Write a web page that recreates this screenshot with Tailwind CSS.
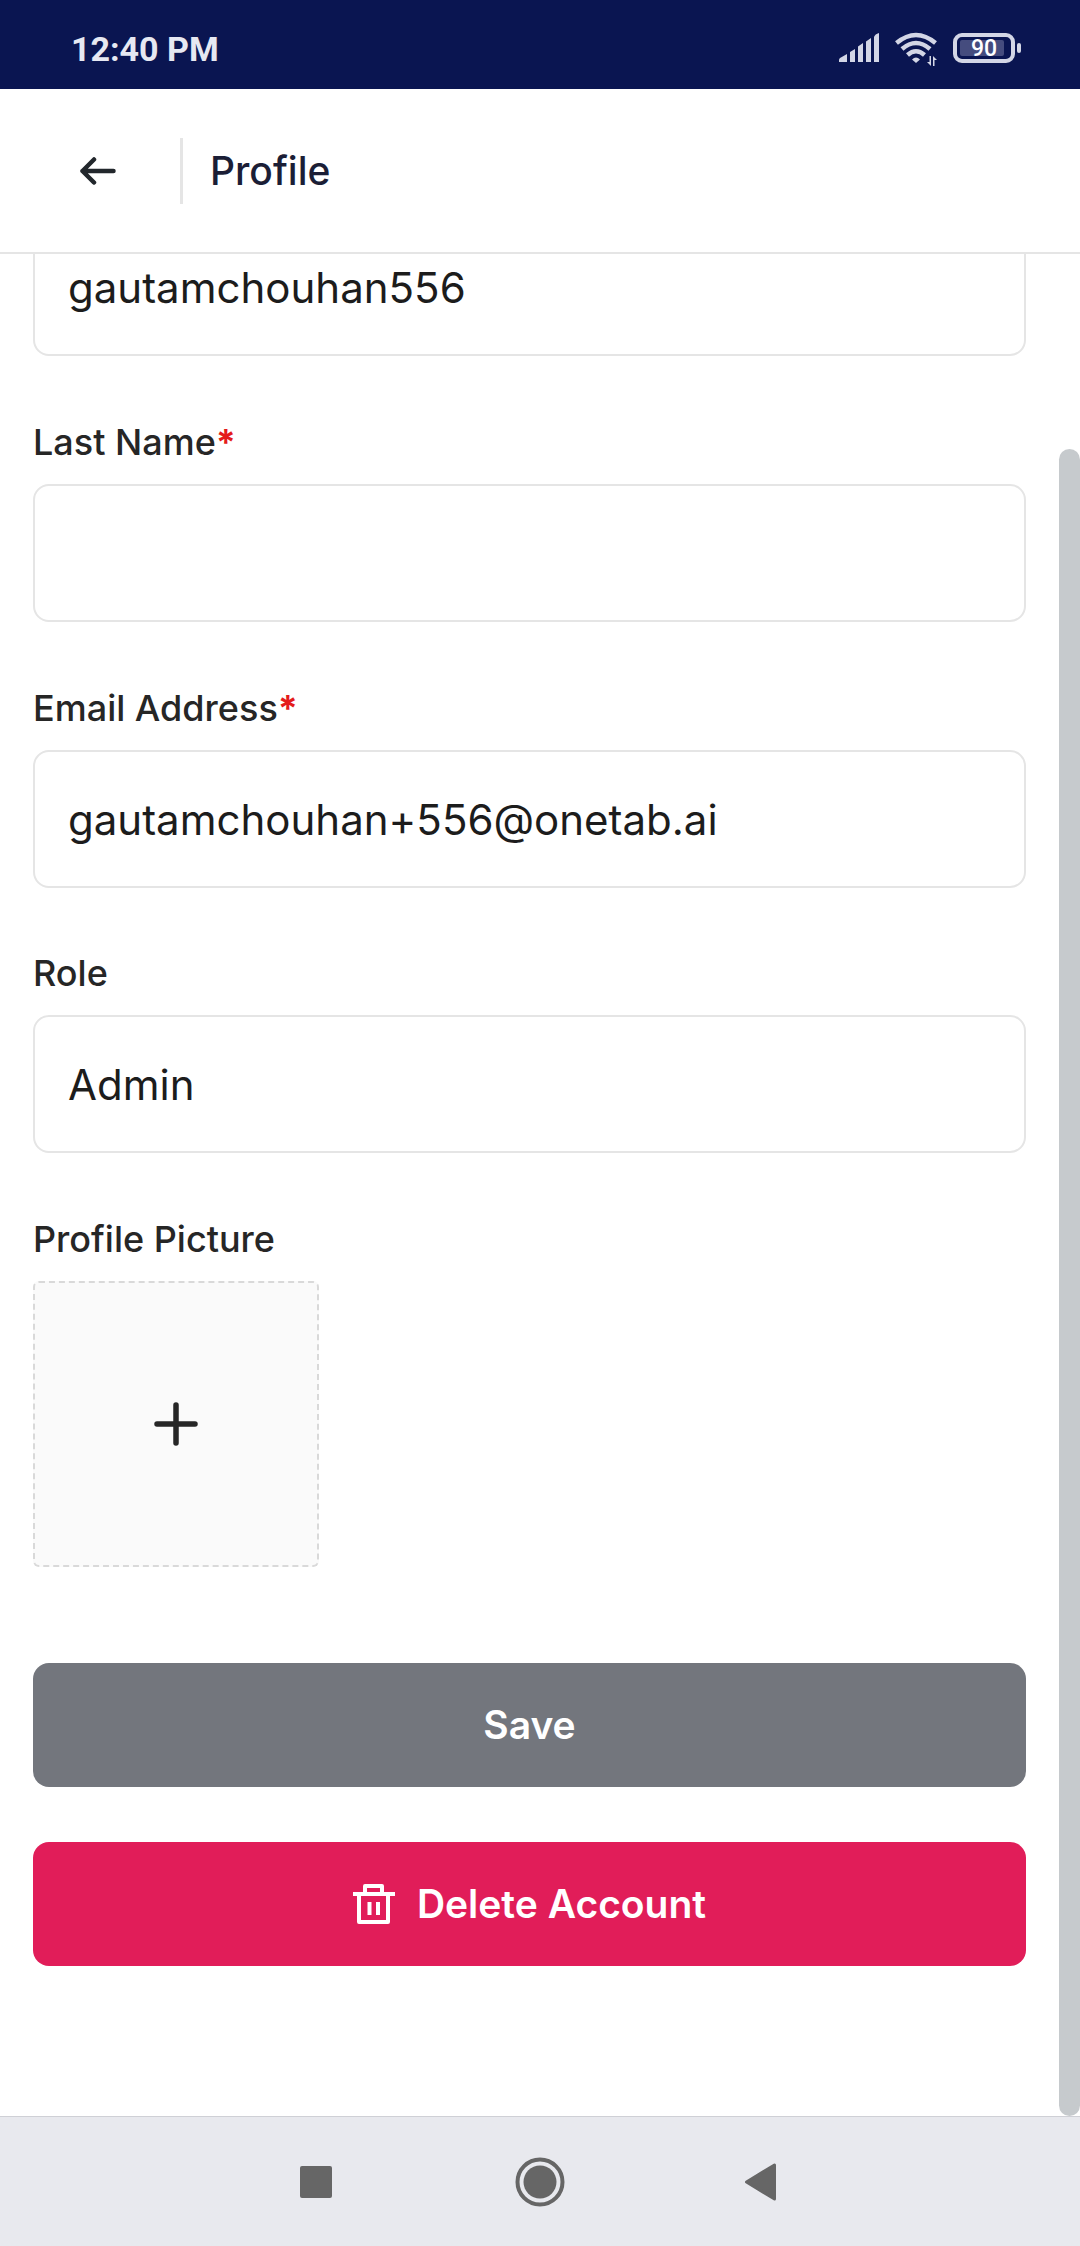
<!DOCTYPE html>
<html lang="en">
<head>
  <meta charset="UTF-8">
  <meta name="viewport" content="width=device-width, initial-scale=1.0">
  <title>Profile</title>
  <script src="https://cdn.jsdelivr.net/npm/@tailwindcss/browser@4"></script>
</head>
<body class="h-screen flex flex-col overflow-hidden bg-white text-[#262626] font-['Inter','Liberation_Sans',sans-serif]">

  <!-- status bar -->
  <div class="h-[89px] shrink-0 bg-[#0a1551] flex items-center justify-between pt-2 pl-[71px] pr-[59px]">
    <span class="font-['Roboto',sans-serif] font-bold text-[34px] leading-[40px] text-[#e6e8f2]">12:40 PM</span>
    <div class="flex items-center gap-4 text-[#d3d6e6]">
      <svg width="40" height="34" viewBox="0 0 40 34" fill="currentColor">
        <path d="M0 30v-2q0-1 1-2l7-4v8zM11 30V20l5-3v13zM19 30V14.500l5-3.500v19zM27 30V9.500l5-3.500v24zM35 30V5q1-3 5-4v29z"/>
      </svg>
      <svg width="42" height="34" viewBox="0 0 42 34" fill="none" stroke="currentColor" stroke-width="4.500">
        <path d="M1.500 11Q21-5 40.500 11M7 17Q21 5 35 17M12.500 23Q21 15.500 29.500 23"/>
        <path d="M17 27.500Q21 23.500 25 27.500L21 31z" fill="currentColor" stroke="none"/>
        <path d="M36 24v10l-4-4h2.500v-6zM38 34V24l4 4h-2.500v6z" fill="currentColor" stroke="none"/>
      </svg>
      <svg width="68" height="34" viewBox="0 0 68 34">
        <rect x="2" y="3" width="58" height="26" rx="7" fill="none" stroke="currentColor" stroke-width="4"/>
        <rect x="7" y="8" width="44" height="16" rx="2" fill="#454c7e"/>
        <rect x="64" y="11" width="4" height="10" rx="2" fill="currentColor"/>
        <text x="31" y="24" text-anchor="middle" fill="#fff" class="font-['Roboto',sans-serif] font-medium text-[23px]">90</text>
      </svg>
    </div>
  </div>

  <!-- header -->
  <header class="h-[165px] shrink-0 border-b-2 border-[#e5e5e5] flex items-center pl-[78px]">
    <button type="button" aria-label="Back" class="mr-16">
      <svg width="38" height="28" viewBox="0 0 38 28" fill="none" stroke="#22272c" stroke-width="4.500" stroke-linecap="round" stroke-linejoin="round">
        <path d="M35.500 14H4.500M16 2.500L4.500 14L16 25.500"/>
      </svg>
    </button>
    <div class="w-[3px] h-[66px] bg-[#e5e5e5] mr-[27px]"></div>
    <h1 class="text-[39px] leading-[48px] font-medium text-[#1b1e36]">Profile</h1>
  </header>

  <main class="relative flex-1 min-h-0 overflow-hidden">
    <!-- form is scrolled, so the first field starts above the visible area -->
    <form class="-mt-9 pl-[33px] pr-[54px]">
      <input type="text" aria-label="First name" value="gautamchouhan556" class="block w-full h-[138px] px-[33px] border-2 border-[#e5e5e5] rounded-2xl text-[42px] leading-[52px] text-[#1c1c1c]">

      <label for="lastName" class="block pt-[66px] pb-[22px] text-[36px] leading-[40px] font-medium">Last Name<span class="font-bold text-[#e41b1b]">*</span></label>
      <input type="text" id="lastName" class="block w-full h-[138px] px-[33px] border-2 border-[#e5e5e5] rounded-2xl text-[42px] leading-[52px] text-[#1c1c1c]">

      <label for="email" class="block pt-[66px] pb-[22px] text-[36px] leading-[40px] font-medium">Email Address<span class="font-bold text-[#e41b1b]">*</span></label>
      <input type="email" id="email" value="gautamchouhan+556@onetab.ai" class="block w-full h-[138px] px-[33px] border-2 border-[#e5e5e5] rounded-2xl text-[42px] leading-[52px] text-[#1c1c1c]">

      <label for="role" class="block pt-[65px] pb-[22px] text-[36px] leading-[40px] font-medium">Role</label>
      <input type="text" id="role" value="Admin" class="block w-full h-[138px] px-[33px] border-2 border-[#e5e5e5] rounded-2xl text-[42px] leading-[52px] text-[#1c1c1c]">

      <label for="picture" class="block pt-[66px] pb-[22px] text-[36px] leading-[40px] font-medium">Profile Picture</label>
      <button type="button" id="picture" class="flex items-center justify-center size-[286px] border-2 border-dashed border-[#d9d9d9] rounded-md bg-[#fafafa]">
        <svg width="44" height="44" viewBox="0 0 44 44" fill="none" stroke="#262626" stroke-width="5.500" stroke-linecap="round">
          <path d="M22 3v38M3 22h38"/>
        </svg>
      </button>

      <button type="submit" class="mt-24 block w-full h-[124px] rounded-2xl bg-[#73767d] text-white text-[39px] leading-[48px] font-semibold">Save</button>
      <button type="button" class="mt-[55px] flex items-center justify-center gap-[22px] w-full h-[124px] rounded-2xl bg-[#e11d59] text-white text-[39px] leading-[48px] font-semibold">
        <svg width="42" height="42" viewBox="0 0 42 42" fill="none" stroke="currentColor" stroke-width="4" stroke-linejoin="round">
          <path d="M0 11h42M6 11v28h29V11M12 11V3h17v8"/>
          <path d="M16.500 19v13M25 19v13"/>
        </svg>
        Delete Account
      </button>
    </form>

    <!-- scrollbar thumb -->
    <div class="absolute right-0 top-[195px] bottom-0 w-[21px] rounded-full bg-[#c6cacd]"></div>
  </main>

  <!-- system navigation -->
  <nav class="h-[130px] shrink-0 border-t border-[#cfd0d6] bg-[#e8e9ee] flex items-center justify-center gap-[172px] text-[#666]">
    <button type="button" aria-label="Recent apps">
      <svg width="50" height="50" viewBox="0 0 50 50" fill="currentColor"><rect x="7" y="9" width="32" height="32" rx="2"/></svg>
    </button>
    <button type="button" aria-label="Home">
      <svg width="50" height="50" viewBox="0 0 50 50" fill="currentColor">
        <circle cx="25" cy="25" r="22.500" fill="none" stroke="currentColor" stroke-width="4"/>
        <circle cx="25" cy="25" r="16.500"/>
      </svg>
    </button>
    <button type="button" aria-label="Back">
      <svg width="50" height="50" viewBox="0 0 50 50" fill="currentColor" stroke="currentColor" stroke-width="3" stroke-linejoin="round"><path d="M9.500 25L37.500 8v34z"/></svg>
    </button>
  </nav>

</body>
</html>
